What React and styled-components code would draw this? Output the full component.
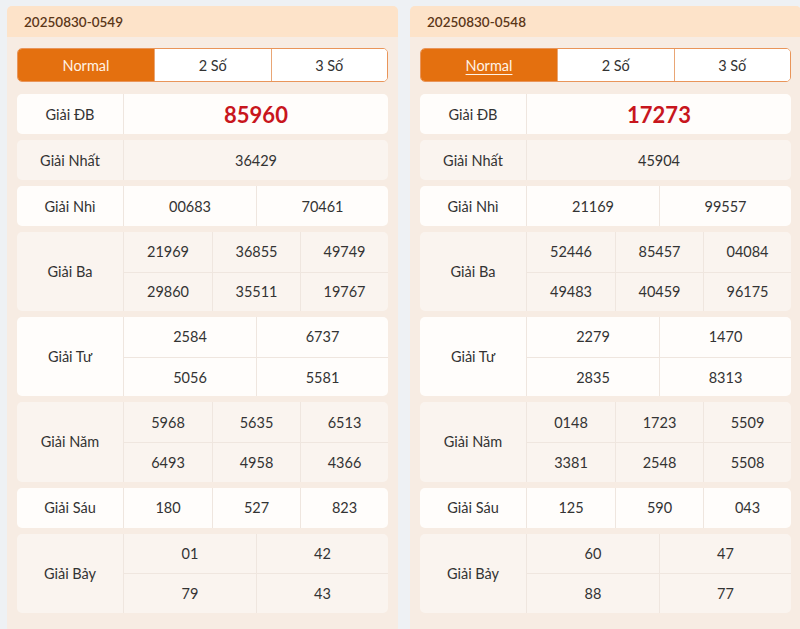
import React from "react";
import styled, { createGlobalStyle } from "styled-components";

const Global = createGlobalStyle`
  html, body { margin: 0; padding: 0; background: #eef1f4; }
  body { font-family: Lato, "Noto Sans", sans-serif; color: #333; overflow: hidden; }
  * { box-sizing: border-box; }
`;

const Page = styled.div`
  width: 800px;
  height: 629px;
  overflow: hidden;
  padding: 6px 0 0 7px;
  display: grid;
  grid-template-columns: 391px 391px;
  column-gap: 12px;
  align-items: start;
`;

const Card = styled.section`
  background: #f7ece3;
  border-radius: 5px 5px 0 0;
  padding-bottom: 20px;
`;

const Header = styled.div`
  height: 31px;
  background: #fde3c9;
  border-radius: 5px 5px 0 0;
  display: flex;
  align-items: center;
  padding-left: 17px;
  font-size: 13.5px;
  font-weight: 600;
  color: #5b3617;
`;

const Body = styled.div`
  padding: 11px 10px 0;
  display: flex;
  flex-direction: column;
  gap: 6px;
`;

const Tabs = styled.div`
  display: grid;
  grid-template-columns: 136px 1fr 1fr;
  height: 34px;
  border: 1px solid #e9955a;
  border-radius: 5px;
  overflow: hidden;
  background: #fff;
  margin-bottom: 6px;
`;

const Tab = styled.div`
  display: flex;
  align-items: center;
  justify-content: center;
  font-size: 14.5px;
  color: ${(p) => (p.$active ? "#fff3e6" : "#333")};
  background: ${(p) => (p.$active ? "#e4700f" : "#fff")};
  border-left: ${(p) => (p.$first ? "none" : "1px solid #e9a675")};
  text-decoration: ${(p) => (p.$underline ? "underline" : "none")};
  text-underline-offset: 3px;
`;

const Row = styled.div`
  display: grid;
  grid-template-columns: 107px 1fr;
  border-radius: 5px;
  background: ${(p) => (p.$alt ? "#faf4ef" : "#fffdfb")};
  overflow: hidden;
`;

const Label = styled.div`
  display: flex;
  align-items: center;
  justify-content: center;
  font-size: 14.5px;
  color: #333;
  border-right: 1px solid #efe6df;
  min-height: 40px;
`;

const Values = styled.div`
  display: grid;
  grid-template-columns: repeat(${(p) => p.$cols}, 1fr);
`;

const Cell = styled.div`
  height: ${(p) => (p.$multi ? "39.6px" : "40px")};
  display: flex;
  align-items: center;
  justify-content: center;
  font-size: ${(p) => (p.$special ? "22px" : "14.5px")};
  font-weight: ${(p) => (p.$special ? 700 : 400)};
  color: ${(p) => (p.$special ? "#c8161d" : "#333")};
  border-left: ${(p) => (p.$firstCol ? "none" : "1px solid #efe6df")};
  border-top: ${(p) => (p.$firstRow ? "none" : "1px solid #efe6df")};
`;

const PRIZES = [
  { label: "Giải ĐB", cols: 1, special: true },
  { label: "Giải Nhất", cols: 1 },
  { label: "Giải Nhì", cols: 2 },
  { label: "Giải Ba", cols: 3 },
  { label: "Giải Tư", cols: 2 },
  { label: "Giải Năm", cols: 3 },
  { label: "Giải Sáu", cols: 3 },
  { label: "Giải Bảy", cols: 2 },
];

const DRAWS = [
  {
    id: "20250830-0549",
    underline: false,
    results: [
      ["85960"],
      ["36429"],
      ["00683", "70461"],
      ["21969", "36855", "49749", "29860", "35511", "19767"],
      ["2584", "6737", "5056", "5581"],
      ["5968", "5635", "6513", "6493", "4958", "4366"],
      ["180", "527", "823"],
      ["01", "42", "79", "43"],
    ],
  },
  {
    id: "20250830-0548",
    underline: true,
    results: [
      ["17273"],
      ["45904"],
      ["21169", "99557"],
      ["52446", "85457", "04084", "49483", "40459", "96175"],
      ["2279", "1470", "2835", "8313"],
      ["0148", "1723", "5509", "3381", "2548", "5508"],
      ["125", "590", "043"],
      ["60", "47", "88", "77"],
    ],
  },
];

function DrawCard({ draw }) {
  return (
    <Card>
      <Header>{draw.id}</Header>
      <Body>
        <Tabs>
          <Tab $active $first $underline={draw.underline}>Normal</Tab>
          <Tab>2 Số</Tab>
          <Tab>3 Số</Tab>
        </Tabs>
        {PRIZES.map((p, i) => {
          const multi = draw.results[i].length > p.cols;
          return (
            <Row key={p.label} $alt={i % 2 === 1}>
              <Label>{p.label}</Label>
              <Values $cols={p.cols}>
                {draw.results[i].map((n, j) => (
                  <Cell
                    key={j}
                    $multi={multi}
                    $special={p.special}
                    $firstCol={j % p.cols === 0}
                    $firstRow={j < p.cols}
                  >
                    {n}
                  </Cell>
                ))}
              </Values>
            </Row>
          );
        })}
      </Body>
    </Card>
  );
}

export default function App() {
  return (
    <>
      <Global />
      <Page>
        {DRAWS.map((d) => (
          <DrawCard key={d.id} draw={d} />
        ))}
      </Page>
    </>
  );
}
